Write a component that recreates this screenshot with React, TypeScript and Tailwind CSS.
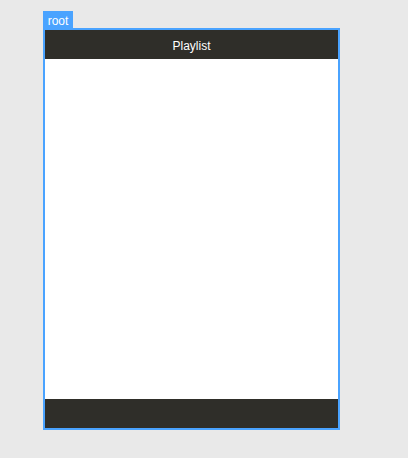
export default function App() {
  return (
    <div className="min-h-[458px] w-full bg-[#e9e9e9] pl-[43px] pt-[11px]">
      <div className="flex h-[17px] w-[30px] items-end justify-center bg-[#4aa3ff] pb-[1px] font-['Liberation_Sans',sans-serif] text-[12px] leading-none text-white">
        root
      </div>
      <div className="flex h-[402px] w-[297px] flex-col border-2 border-[#4aa3ff] bg-white">
        <div className="flex h-[29px] items-center justify-center bg-[#2f2e29] pt-[2px] font-['Liberation_Sans',sans-serif] text-[12px] leading-none text-white">
          Playlist
        </div>
        <div className="flex-1 bg-white" />
        <div className="h-[29px] bg-[#2f2e29]" />
      </div>
    </div>
  );
}
